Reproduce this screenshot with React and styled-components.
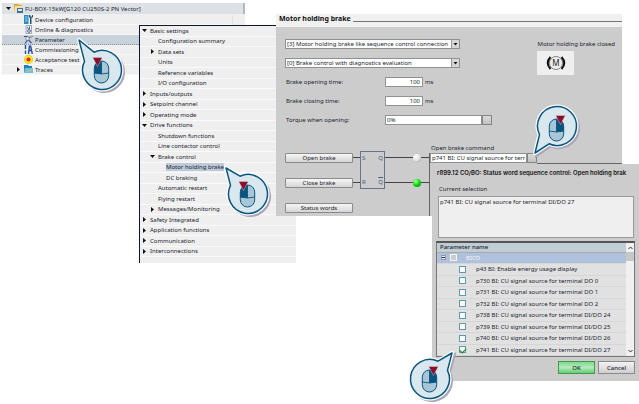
import styled, { createGlobalStyle } from "styled-components";

const COLOR = {
  text: "#20242e",
  panel: "#cccccc",
  list: "#efefef",
  selected: "#c9d2db",
  line: "#6f7678",
  navy: "#0d1830",
  callout: "#0a5580",
};

const deviceTree = [
  { icon: "config", label: "Device configuration" },
  { icon: "online", label: "Online & diagnostics" },
  { icon: "param", label: "Parameter", selected: true },
  { icon: "tools", label: "Commissioning" },
  { icon: "test", label: "Acceptance test" },
  { icon: "folder", label: "Traces", arrow: "right" },
];

const settings = [
  { level: 0, arrow: "down", label: "Basic settings" },
  { level: 1, label: "Configuration summary" },
  { level: 1, arrow: "right", label: "Data sets" },
  { level: 1, label: "Units" },
  { level: 1, label: "Reference variables" },
  { level: 1, label: "I/O configuration" },
  { level: 0, arrow: "right", label: "Inputs/outputs" },
  { level: 0, arrow: "right", label: "Setpoint channel" },
  { level: 0, arrow: "right", label: "Operating mode" },
  { level: 0, arrow: "down", label: "Drive functions" },
  { level: 1, label: "Shutdown functions" },
  { level: 1, label: "Line contactor control" },
  { level: 1, arrow: "down", label: "Brake control" },
  { level: 2, label: "Motor holding brake", selected: true },
  { level: 2, label: "DC braking" },
  { level: 1, label: "Automatic restart" },
  { level: 1, label: "Flying restart" },
  { level: 1, arrow: "right", label: "Messages/Monitoring" },
  { level: 0, arrow: "right", label: "Safety Integrated" },
  { level: 0, arrow: "right", label: "Application functions" },
  { level: 0, arrow: "right", label: "Communication" },
  { level: 0, arrow: "right", label: "Interconnections" },
];

const parameters = [
  { id: "p43", text: "BI: Enable energy usage display" },
  { id: "p730", text: "BI: CU signal source for terminal DO 0" },
  { id: "p731", text: "BI: CU signal source for terminal DO 1" },
  { id: "p732", text: "BI: CU signal source for terminal DO 2" },
  { id: "p738", text: "BI: CU signal source for terminal DI/DO 24" },
  { id: "p739", text: "BI: CU signal source for terminal DI/DO 25" },
  { id: "p740", text: "BI: CU signal source for terminal DI/DO 26" },
  { id: "p741", text: "BI: CU signal source for terminal DI/DO 27", checked: true },
];

const Arrow = ({ dir }) => (
  <ArrowBox>
    {dir && (
      <svg width="5" height="5" viewBox="0 0 5 5">
        <path d={dir === "down" ? "M0 1H5L2.5 4Z" : "M1 0V5L4 2.5Z"} fill="#111" />
      </svg>
    )}
  </ArrowBox>
);

const TreeIcon = ({ name }) => (
  <svg width="9" height="9" viewBox="0 0 9 9">
    {name === "drive" && (
      <>
        <path d="M0 0H4L5 1H8V8H0Z" fill="#dba93a" />
        <path d="M1 2H8V8H0Z" fill="#f6e2a0" />
        <path d="M3 4H9V9H3Z" fill="#3f6f9c" />
        <path d="M4 5H8V7H4Z" fill="#dce8f2" />
      </>
    )}
    {name === "config" && (
      <>
        <path d="M0 0H4.5V9H0Z" fill="#2f8cc0" />
        <path d="M1 2H3.5M1 4H3.5M1 6H3.5" stroke="#d3ebf7" strokeWidth="0.7" />
        <path d="M5 0V2.5H6V9H7.5V2.5H9V0H8V1.5H6.3V0Z" fill="#24507c" />
      </>
    )}
    {name === "online" && (
      <>
        <path d="M2 0.5H7.5V8.5H2Z" fill="#eef1f8" stroke="#8b94ae" strokeWidth="0.8" />
        <path d="M3 2L5 4.5M5.5 1.5V4" stroke="#43538a" strokeWidth="0.9" />
        <circle cx="5" cy="6" r="1.4" fill="none" stroke="#43538a" strokeWidth="0.9" />
      </>
    )}
    {name === "param" && (
      <>
        <path d="M0 1.5H3L5 3L8.5 1M1 8.5L4 4.5L7.5 8" fill="none" stroke="#2f5795" strokeWidth="1.2" />
        <circle cx="3.5" cy="3.5" r="1.8" fill="#e9edf5" stroke="#5b79a8" strokeWidth="0.7" />
        <circle cx="7" cy="2" r="1" fill="#d9b45a" />
      </>
    )}
    {name === "tools" && (
      <path
        d="M1.5 0V4M1.5 5.5V9M5.5 0.5L4.5 9M6.5 0.5L8.3 9M5 5.5H7.5"
        fill="none"
        stroke="#1f4fa8"
        strokeWidth="1.4"
      />
    )}
    {name === "test" && (
      <>
        <circle cx="4.5" cy="4.5" r="4.2" fill="#ffe71f" stroke="#c9b400" strokeWidth="0.5" />
        <circle cx="4.5" cy="4.5" r="2.1" fill="#e0222c" />
      </>
    )}
    {name === "folder" && (
      <>
        <path d="M0 0H4L5 1H8V8H0Z" fill="#1d83bd" />
        <path d="M1 3H9V8H0Z" fill="#6fc0e6" />
        <path d="M3 7L5 5L6 6L8.5 4" fill="none" stroke="#f0c23a" strokeWidth="1" />
      </>
    )}
  </svg>
);

// Speech bubble with a mouse in it; the tail points to (tipX, tipY) from the centre.
const Callout = ({ left, top, tipX, tipY, button, mouseY = 2 }) => {
  const sx = Math.sign(tipX);
  const sy = Math.sign(tipY);
  const sweep = sx * sy > 0 ? 1 : 0;
  const bubble = `M${tipX} ${tipY}L${sx * 8} ${sy * 17.8}A19.5 19.5 0 1 ${sweep} ${sx * 17.5} ${sy * 8.6}Z`;
  const mid = button === "left" ? -4 : 4;
  return (
    <CalloutBox $left={left} $top={top}>
      <svg width="72" height="72" viewBox="-36 -36 72 72">
        <path d={bubble} transform="translate(2 2)" fill="#a9a5ba" stroke="#a9a5ba" strokeWidth="3" />
        <path d={bubble} fill="#fff" stroke="#fff" strokeWidth="4" strokeLinejoin="round" />
        <path d={bubble} fill="#d9e7ee" stroke={COLOR.callout} strokeWidth="1.5" strokeLinejoin="round" />
        <g transform={`translate(-0.5 ${mouseY})`}>
          <rect x="-7.2" y="-11" width="14.4" height="22" rx="7.2" fill="#a9c6d6" />
          {button === "left" ? (
            <path d="M0 -11A7.2 7.2 0 0 0 -7.2 -3.8V1Q-4 2 0 2Z" fill={COLOR.callout} />
          ) : (
            <path d="M0 -11A7.2 7.2 0 0 1 7.2 -3.8V1Q4 2 0 2Z" fill={COLOR.callout} />
          )}
          <path d="M-7.2 1Q0 3 7.2 1M0 -11V2" fill="none" stroke={COLOR.callout} strokeWidth="0.9" />
          <rect x="-7.2" y="-11" width="14.4" height="22" rx="7.2" fill="none" stroke={COLOR.callout} strokeWidth="1" />
          <path
            d={`M${mid - 4.8} -14.5H${mid + 4.8}L${mid} -5.5Z`}
            fill="#8a0f2c"
            stroke="#e9dfe6"
            strokeWidth="0.4"
          />
        </g>
      </svg>
    </CalloutBox>
  );
};

const App = () => {
  return (
    <>
      <GlobalStyle />
      <Desktop>
        <DeviceWindow>
          <DeviceHead>
            <Arrow dir="down" />
            <TreeIcon name="drive" />
            <span>FU-BOX-15kW[G120 CU250S-2 PN Vector]</span>
          </DeviceHead>
          <DeviceRows>
            {deviceTree.map((item) => (
              <DeviceRow key={item.label} $selected={item.selected}>
                <Arrow dir={item.arrow} />
                <TreeIcon name={item.icon} />
                <span>{item.label}</span>
              </DeviceRow>
            ))}
          </DeviceRows>
        </DeviceWindow>

        <SettingsWindow>
          {settings.map((item) => (
            <SettingsRow key={item.label} $level={item.level}>
              <Arrow dir={item.arrow} />
              <SettingsLabel $selected={item.selected}>{item.label}</SettingsLabel>
            </SettingsRow>
          ))}
        </SettingsWindow>

        <BrakeWindow>
          <BrakeHead>
            <h1>Motor holding brake</h1>
          </BrakeHead>
          <BrakeBody>
            <BrakeTop>
              <Fields>
                <Select aria-label="Brake configuration">
                  <option>[3] Motor holding brake like sequence control connection</option>
                </Select>
                <Select aria-label="Brake diagnostics">
                  <option>[0] Brake control with diagnostics evaluation</option>
                </Select>
                <Field>
                  <label htmlFor="opening">Brake opening time:</label>
                  <NumberInput id="opening" defaultValue="100" />
                  <span>ms</span>
                </Field>
                <Field>
                  <label htmlFor="closing">Brake closing time:</label>
                  <NumberInput id="closing" defaultValue="100" />
                  <span>ms</span>
                </Field>
                <Field>
                  <label htmlFor="torque">Torque when opening:</label>
                  <TextInput id="torque" defaultValue="0%" />
                  <SquareButton aria-label="Select torque source" />
                </Field>
              </Fields>
              <Status>
                <span>Motor holding brake closed</span>
                <StatusIcon>
                  <svg width="20" height="16" viewBox="0 0 20 16">
                    <circle cx="10" cy="8" r="6.5" fill="none" stroke="#555" strokeWidth="0.7" />
                    <path
                      d="M4.5 2Q-1 8 4.5 14M15.5 2Q21 8 15.5 14"
                      fill="none"
                      stroke="#111"
                      strokeWidth="2"
                    />
                    <text x="10" y="11" textAnchor="middle" fontSize="8" fill="#222">
                      M
                    </text>
                  </svg>
                </StatusIcon>
              </Status>
            </BrakeTop>

            <Logic>
              <LogicButtons>
                <Button>Open brake</Button>
                <Button>Close brake</Button>
                <Button>Status words</Button>
              </LogicButtons>
              <Wires>
                <Wire />
                <Wire />
              </Wires>
              <FlipFlop>
                <span>S</span>
                <span>Q</span>
                <span>R</span>
                <Inverted>Q</Inverted>
              </FlipFlop>
              <Outputs>
                <Output>
                  <Lamp />
                </Output>
                <Output>
                  <Lamp $on />
                </Output>
              </Outputs>
              <Command>
                <label htmlFor="command">Open brake command</label>
                <CommandLine>
                  <CommandInput id="command" defaultValue="p741 BI: CU signal source for terminal DI/DO 27" />
                  <SquareButton aria-label="Select signal source" />
                </CommandLine>
              </Command>
            </Logic>
          </BrakeBody>
        </BrakeWindow>

        <Dialog>
          <h2>r899.12 CO/BO: Status word sequence control: Open holding brak</h2>
          <label htmlFor="selection">Current selection</label>
          <Selection id="selection" readOnly defaultValue="p741 BI: CU signal source for terminal DI/DO 27" />
          <TableFrame>
            <Table>
              <thead>
                <tr>
                  <th>Parameter name</th>
                </tr>
              </thead>
              <tbody>
                <GroupRow>
                  <td>
                    <Cell>
                      <Expander aria-label="Collapse BICO">
                        <svg width="3" height="3" viewBox="0 0 3 3">
                          <path d="M0 1.5H3" stroke="#333" />
                        </svg>
                      </Expander>
                      <GroupCheck type="checkbox" id="bico" />
                      <label htmlFor="bico">BICO</label>
                    </Cell>
                  </td>
                </GroupRow>
                {parameters.map(({ id, text, checked }) => (
                  <tr key={id}>
                    <td>
                      <ParamCell>
                        <Check type="checkbox" id={id} defaultChecked={checked} />
                        <label htmlFor={id}>{`${id} ${text}`}</label>
                      </ParamCell>
                    </td>
                  </tr>
                ))}
              </tbody>
            </Table>
            <Scrollbar>
              <svg width="5" height="4" viewBox="0 0 5 4">
                <path d="M0.5 3L2.5 1L4.5 3" fill="none" stroke="#333" />
              </svg>
              <Thumb />
              <svg width="5" height="4" viewBox="0 0 5 4">
                <path d="M0.5 1L2.5 3L4.5 1" fill="none" stroke="#333" />
              </svg>
            </Scrollbar>
          </TableFrame>
          <Actions>
            <DialogButton $primary>OK</DialogButton>
            <DialogButton>Cancel</DialogButton>
          </Actions>
        </Dialog>

        <Callout left={102} top={70} tipX={-23} tipY={-30} button="left" />
        <Callout left={248} top={194} tipX={-22} tipY={-26} button="left" />
        <Callout left={557} top={126} tipX={-22} tipY={27} button="right" mouseY={4} />
        <Callout left={430} top={379} tipX={22} tipY={-26} button="right" />
      </Desktop>
    </>
  );
};

export default App;

const GlobalStyle = createGlobalStyle`
  * {
    box-sizing: border-box;
  }

  body {
    margin: 0;
    background-color: #fff;
    overflow: hidden;
  }

  body, button, input, select, textarea {
    color: ${COLOR.text};
    font-family: "Noto Sans", "Open Sans", sans-serif;
    font-size: 6px;
    line-height: 8px;
  }

  h1, h2 {
    margin: 0;
    color: #111;
  }

  svg {
    display: block;
    flex-shrink: 0;
  }
`;

const Desktop = styled.main`
  position: relative;
  min-height: 100vh;
`;

const ArrowBox = styled.span`
  width: 6px;
  flex-shrink: 0;
`;

const DeviceWindow = styled.section`
  position: absolute;
  left: 2px;
  top: 3px;
  width: 243px;
`;

const DeviceHead = styled.div`
  height: 11px;
  padding-left: 4px;
  display: flex;
  align-items: center;
  gap: 2px;
  background-color: #dde1e5;
  border-right: 2px solid #b4b8bb;

  span {
    white-space: nowrap;
  }
`;

const DeviceRows = styled.div`
  padding: 1px 12px 0 0;
  background-color: ${COLOR.list};
`;

const DeviceRow = styled.div`
  height: 10px;
  padding-left: 14px;
  display: flex;
  align-items: center;
  gap: 2px;
  background-color: ${({ $selected }) => ($selected ? COLOR.selected : "transparent")};
  border-bottom: 1px ${({ $selected }) => ($selected ? "dotted #8a9299" : "solid #f8f8f8")};
  border-right: 1px solid #e0e0e0;
`;

const SettingsWindow = styled.nav`
  position: absolute;
  left: 139px;
  top: 25px;
  width: 157px;
  height: 238px;
  padding-bottom: 6px;
  display: grid;
  grid-auto-rows: 1fr;
  background-color: ${COLOR.list};
  border-left: 1px solid ${COLOR.navy};
  border-top: 1px solid ${COLOR.navy};
`;

const SettingsRow = styled.div`
  padding-left: ${({ $level }) => 2 + $level * 8}px;
  display: flex;
  align-items: center;
  gap: 2px;
  border-bottom: 1px solid #fafafa;
`;

const SettingsLabel = styled.span`
  white-space: nowrap;
  background-color: ${({ $selected }) => ($selected ? "#bccada" : "transparent")};
`;

const BrakeWindow = styled.section`
  position: absolute;
  left: 276px;
  right: 17px;
  top: 14px;
  background-color: ${COLOR.panel};
`;

const BrakeHead = styled.header`
  height: 13px;
  padding: 0 0 3px 3px;
  display: flex;
  align-items: center;
  gap: 2px;
  background-color: #f0f0f0;

  h1 {
    font-size: 7px;
    line-height: 10px;
    white-space: nowrap;
  }

  &::after {
    content: "";
    flex: 1;
    height: 1px;
    margin-top: 5px;
    background-color: ${COLOR.line};
  }
`;

const BrakeBody = styled.div`
  padding: 12px 0 0 9px;
`;

const BrakeTop = styled.div`
  display: flex;
  justify-content: space-between;
`;

const Fields = styled.div`
  width: 207px;
  display: flex;
  flex-direction: column;
  gap: 9px;
`;

const Select = styled.select`
  width: 175px;
  height: 10px;
  padding: 0 10px 0 1px;
  appearance: none;
  background: #fff
    url("data:image/svg+xml,%3Csvg xmlns='http://www.w3.org/2000/svg' viewBox='0 0 8 8'%3E%3Cpath d='M0 0H8V8H0Z' fill='%23d6d6d6'/%3E%3Cpath d='M0.5 0V8' stroke='%23999'/%3E%3Cpath d='M2.5 3H6.5L4.5 5.5Z' fill='%23111'/%3E%3C/svg%3E")
    right / 8px 8px no-repeat;
  border: 1px solid #8d9293;
  border-radius: 0;
`;

const Field = styled.div`
  height: 10px;
  padding-left: 1px;
  display: flex;
  align-items: center;

  label {
    width: 99px;
    flex-shrink: 0;
  }
`;

const TextInput = styled.input`
  min-width: 0;
  flex: 1;
  height: 10px;
  padding: 0 1px;
  background-color: #fff;
  border: 1px solid #8d9293;
`;

const NumberInput = styled(TextInput)`
  flex: 0 0 38px;
  margin-right: 2px;
  padding-right: 2px;
  text-align: right;
`;

const SquareButton = styled.button`
  width: 10px;
  height: 10px;
  flex-shrink: 0;
  padding: 0;
  background: linear-gradient(#dadada, #c2c2c2);
  border: 1px solid #858585;
`;

const Status = styled.div`
  padding: 1px 7px 0 0;
  display: flex;
  flex-direction: column;
  gap: 3px;
  white-space: nowrap;
`;

const StatusIcon = styled.div`
  width: 37px;
  height: 24px;
  display: flex;
  align-items: center;
  justify-content: center;
  background-color: ${COLOR.list};
`;

const Logic = styled.div`
  padding-top: 19px;
  display: flex;
  align-items: flex-start;
`;

const LogicButtons = styled.div`
  width: 68px;
  padding-top: 9px;
  display: flex;
  flex-direction: column;
  gap: 15px;
`;

const Button = styled.button`
  height: 10px;
  padding: 0;
  background: linear-gradient(#f6f6f6, #d5d5d5);
  border: 1px solid #8b8b8b;
  border-radius: 1px;
`;

const Wires = styled.div`
  width: 7px;
  padding-top: 13px;
  display: flex;
  flex-direction: column;
  gap: 24px;
`;

const Wire = styled.div`
  height: 1px;
  background-color: #444;
`;

const FlipFlop = styled.div`
  width: 25px;
  height: 38px;
  margin-top: 7px;
  padding: 2px 1px;
  display: grid;
  grid-template-columns: 1fr auto;
  align-content: space-between;
  color: #4a5a7a;
  border: 1px solid #66738c;
`;

const Inverted = styled.span`
  text-decoration: overline;
`;

const Outputs = styled.div`
  width: 44px;
  padding-top: 9px;
  display: flex;
  flex-direction: column;
  gap: 16px;
`;

const Output = styled.div`
  height: 9px;
  display: flex;
  align-items: center;

  &::before, &::after {
    content: "";
    height: 1px;
    flex: 0 0 28px;
    background-color: #444;
  }

  &::after {
    flex: 1;
  }
`;

const Lamp = styled.span`
  width: 8px;
  height: 8px;
  border-radius: 50%;
  background: ${({ $on }) =>
    $on
      ? "radial-gradient(circle at 35% 30%, #b6ffb6, #0be00b 45%, #067a06)"
      : "radial-gradient(circle at 35% 30%, #fff, #ddd 60%, #777)"};
`;

const Command = styled.div`
  flex: 1;

  label {
    display: block;
    height: 9px;
    padding-left: 2px;
  }
`;

const CommandLine = styled.div`
  height: 63px;
  display: flex;
  border-left: 1px solid #666;

  &::after {
    content: "";
    flex: 1;
    height: 10px;
    border-bottom: 1px solid #666;
  }
`;

const CommandInput = styled(TextInput)`
  flex: 0 0 97px;
`;

const Dialog = styled.section`
  position: absolute;
  left: 432px;
  right: 0;
  top: 164px;
  padding: 5px 4px 7px;
  display: flex;
  flex-direction: column;
  background-color: ${COLOR.panel};

  h2 {
    padding-left: 1px;
    font-family: Inter, "Liberation Sans", sans-serif;
    font-size: 6px;
    line-height: 8px;
    font-weight: 600;
    white-space: nowrap;
  }

  & > label {
    padding: 8px 0 3px 3px;
  }
`;

const Selection = styled.textarea`
  height: 42px;
  margin: 0 1px 3px 2px;
  padding: 1px;
  resize: none;
  background-color: ${COLOR.list};
  border: 1px solid #999;
`;

const TableFrame = styled.div`
  height: 116px;
  display: flex;
  background-color: #e1e1e1;
  border: 1px solid #777;
  border-top: 2px solid #555;
`;

const Table = styled.table`
  flex: 1;
  height: 100%;
  border-collapse: collapse;

  th {
    height: 9px;
    padding: 0 3px;
    text-align: left;
    font-weight: 500;
    background-color: #bfced5;
    border-bottom: 1px solid #aaa;
  }

  td {
    padding: 0;
    border-bottom: 1px solid #d6d6d6;
  }
`;

const GroupRow = styled.tr`
  color: #f3f6fb;
  background-color: #b0c1de;
`;

const Cell = styled.div`
  padding-left: 4px;
  display: flex;
  align-items: center;
  gap: 4px;

  label {
    padding-left: 5px;
  }
`;

const ParamCell = styled.div`
  padding-left: 22px;
  display: flex;
  align-items: center;
  gap: 10px;
`;

const Expander = styled.button`
  width: 5px;
  height: 5px;
  padding: 0;
  display: grid;
  place-items: center;
  background-color: #eee;
  border: 1px solid #8b96a8;
`;

const Check = styled.input`
  width: 7px;
  height: 7px;
  margin: 0;
  appearance: none;
  background-color: #fff;
  border: 1px solid #5b9ab5;

  &:checked {
    display: grid;
    place-items: center;
  }

  &:checked::after {
    content: "";
    width: 5px;
    height: 3px;
    border-left: 1px solid #128a12;
    border-bottom: 1px solid #128a12;
    transform: rotate(-45deg);
  }
`;

const GroupCheck = styled(Check)`
  background-color: #ccc;
  border-color: #f4f4f4;
`;

const Scrollbar = styled.div`
  width: 8px;
  padding: 3px 0;
  display: flex;
  flex-direction: column;
  align-items: center;
  gap: 2px;
  background-color: #f0f0f0;

  svg:last-child {
    margin-top: auto;
  }
`;

const Thumb = styled.div`
  width: 8px;
  height: 9px;
  background-color: #c8c8c8;
`;

const Actions = styled.div`
  padding-top: 4px;
  display: flex;
  justify-content: flex-end;
  gap: 3px;
`;

const DialogButton = styled.button`
  width: 37px;
  height: 13px;
  padding: 0;
  font-weight: 500;
  background: ${({ $primary }) =>
    $primary ? "linear-gradient(#7fd98f, #b5e8bd 50%, #5fcf72)" : "linear-gradient(#f3f3f3, #cfcfcf)"};
  border: 1px solid ${({ $primary }) => ($primary ? "#3f9a50" : "#8b8b8b")};
`;

const CalloutBox = styled.div`
  position: absolute;
  left: ${({ $left }) => $left - 36}px;
  top: ${({ $top }) => $top - 36}px;
  pointer-events: none;
`;
